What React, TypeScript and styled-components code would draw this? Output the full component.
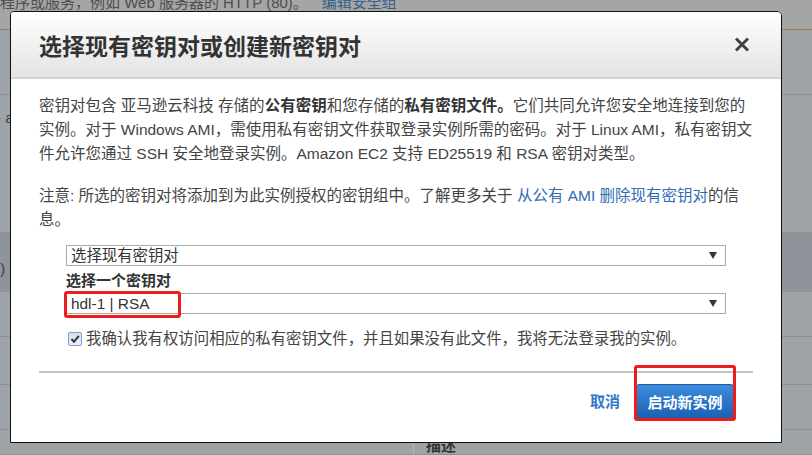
import styled, { createGlobalStyle } from 'styled-components'

const GlobalStyle = createGlobalStyle`
  html, body {
    margin: 0;
    padding: 0;
  }
  body {
    font-family: "Liberation Sans", "Noto Sans CJK SC", sans-serif;
  }
`

const Page = styled.div`
  position: relative;
  width: 812px;
  height: 455px;
  overflow: hidden;
  background: #9ea3a8;
  display: flex;
  flex-direction: column;
`

const TopStrip = styled.div`
  height: 29px;
  flex-shrink: 0;
  background: #a3a6a4;
  border-bottom: 1px solid #a57b4f;
  overflow: hidden;
  white-space: nowrap;
  font-size: 15px;
  line-height: 15px;
  color: #4d4f50;

  p {
    margin: -5px 0 0 0;
  }

  a {
    color: #3a5f8e;
    text-decoration: none;
    margin-left: 14px;
  }
`

const BgRow = styled.div<{ $h: number; $dark?: boolean }>`
  height: ${(p) => p.$h}px;
  flex-shrink: 0;
  box-sizing: border-box;
  border-bottom: 1px solid #8c9095;
  background: ${(p) => (p.$dark ? '#8f949a' : 'transparent')};
  display: flex;
  align-items: center;
  font-size: 15px;
  color: #3c3f42;
  position: relative;
`

const BgEdge = styled.span<{ $top: number }>`
  align-self: flex-start;
  margin-top: ${(p) => p.$top}px;
  margin-left: -4px;
`

const BgCell = styled.div`
  margin-left: 413px;
  align-self: stretch;
  border-left: 1px solid #b3b7bb;
  padding: 4px 0 0 12px;
  font-weight: bold;
  color: #333;
`

const Modal = styled.div`
  position: absolute;
  left: 10px;
  top: 11px;
  width: 772px;
  height: 432px;
  box-sizing: border-box;
  background: #fff;
  border: 1px solid #111;
  border-radius: 4px 5px 0 0;
  display: flex;
  flex-direction: column;
  overflow: hidden;
`

const Header = styled.div`
  height: 67px;
  flex-shrink: 0;
  box-sizing: border-box;
  background: linear-gradient(#ffffff, #e3e3e3);
  border-bottom: 2px solid #d3d3d3;
  display: flex;
  align-items: center;
  justify-content: space-between;
  padding: 0 30px 0 28px;
`

const Title = styled.h1`
  margin: 0;
  font-size: 23px;
  font-weight: bold;
  color: #333;
`

const CloseButton = styled.button`
  border: 0;
  background: none;
  padding: 0;
  width: 18px;
  height: 16px;
  display: flex;
  align-items: center;
  justify-content: center;
  cursor: pointer;
`

const Body = styled.div`
  padding: 15px 28px 0 28px;
  font-size: 15.5px;
  line-height: 24px;
  color: #444;
  display: flex;
  flex-direction: column;
`

const Para = styled.p<{ $gap?: number }>`
  margin: ${(p) => p.$gap ?? 0}px 0 0 0;
  white-space: nowrap;

  b {
    color: #333;
  }
`

const Link = styled.a`
  color: #2f6db5;
  text-decoration: none;
`

const Form = styled.div`
  margin: 13px 0 0 27px;
  width: 660px;
  display: flex;
  flex-direction: column;
`

const SelectWrap = styled.div`
  position: relative;
`

const Select = styled.div`
  height: 21px;
  box-sizing: border-box;
  border: 1px solid #a9a9a9;
  display: flex;
  align-items: center;
  justify-content: space-between;
  padding: 0 8px 0 4px;
  font-size: 15.4px;
  color: #333;
`

const Arrow = styled.span`
  width: 0;
  height: 0;
  border-left: 4px solid transparent;
  border-right: 4px solid transparent;
  border-top: 7px solid #333;
`

const Label = styled.div`
  margin: 4px 0 2px 0;
  font-size: 15px;
  line-height: 21px;
  font-weight: bold;
  color: #333;
`

const Highlight = styled.div<{ $l: number; $t: number; $w: number; $h: number }>`
  position: absolute;
  left: ${(p) => p.$l}px;
  top: ${(p) => p.$t}px;
  width: ${(p) => p.$w}px;
  height: ${(p) => p.$h}px;
  box-sizing: border-box;
  border: 3px solid #ee1d1d;
  border-radius: 3px;
  pointer-events: none;
`

const CheckRow = styled.label`
  margin: 15px 0 0 2px;
  display: flex;
  align-items: center;
  gap: 4px;
  font-size: 15.4px;
  line-height: 20px;
  color: #444;
  white-space: nowrap;
`

const CheckBox = styled.span`
  width: 14px;
  height: 14px;
  flex-shrink: 0;
  box-sizing: border-box;
  border: 1px solid #7d9fd0;
  border-radius: 2px;
  background: linear-gradient(#d6e1f0, #eef2f8);
  display: flex;
  align-items: center;
  justify-content: center;
`

const Divider = styled.hr`
  margin: 22px 0 0 0;
  border: 0;
  border-top: 2px solid #c4c4c4;
`

const Footer = styled.div`
  margin-top: 11px;
  display: flex;
  align-items: center;
  justify-content: flex-end;
  gap: 16px;
  padding-right: 19px;
`

const CancelLink = styled.a`
  font-size: 15px;
  font-weight: bold;
  color: #3477c6;
  text-decoration: none;
`

const ButtonWrap = styled.div`
  position: relative;
`

const PrimaryButton = styled.button`
  height: 35px;
  width: 98px;
  box-sizing: border-box;
  border: 1px solid #1c5aa3;
  border-radius: 3px;
  background: linear-gradient(#3d8cdc, #1a61b3);
  color: #fff;
  font-family: inherit;
  font-size: 15px;
  font-weight: bold;
  padding: 0;
  cursor: pointer;
`

export default function App() {
  return (
    <>
      <GlobalStyle />
      <Page>
        <TopStrip>
          <p>
            程序或服务，例如 Web 服务器的 HTTP (80)。<a>编辑安全组</a>
          </p>
        </TopStrip>
        <BgRow $h={65} />
        <BgRow $h={138}>
          <BgEdge $top={14}>- a</BgEdge>
        </BgRow>
        <BgRow $h={59} $dark>
          <BgEdge $top={27}>&nbsp;)</BgEdge>
        </BgRow>
        <BgRow $h={45} />
        <BgRow $h={48} />
        <BgRow $h={45} />
        <BgRow $h={25}>
          <BgCell>描述</BgCell>
        </BgRow>

        <Modal>
          <Header>
            <Title>选择现有密钥对或创建新密钥对</Title>
            <CloseButton aria-label="关闭">
              <svg width="16" height="15" viewBox="0 0 16 15">
                <path d="M2 1.5 L14 13.5 M14 1.5 L2 13.5" stroke="#444" strokeWidth="3" />
              </svg>
            </CloseButton>
          </Header>
          <Body>
            <Para>
              密钥对包含 亚马逊云科技 存储的<b>公有密钥</b>和您存储的<b>私有密钥文件。</b>它们共同允许您安全地连接到您的
              <br />
              实例。对于 Windows AMI，需使用私有密钥文件获取登录实例所需的密码。对于 Linux AMI，私有密钥文
              <br />
              件允许您通过 SSH 安全地登录实例。Amazon EC2 支持 ED25519 和 RSA 密钥对类型。
            </Para>
            <Para $gap={18}>
              注意: 所选的密钥对将添加到为此实例授权的密钥组中。了解更多关于 <Link>从公有 AMI 删除现有密钥对</Link>的信
              <br />
              息。
            </Para>
            <Form>
              <Select>
                <span>选择现有密钥对</span>
                <Arrow />
              </Select>
              <Label>选择一个密钥对</Label>
              <SelectWrap>
                <Select>
                  <span>hdl-1 | RSA</span>
                  <Arrow />
                </Select>
                <Highlight $l={-2} $t={-2} $w={117} $h={27} />
              </SelectWrap>
              <CheckRow>
                <CheckBox>
                  <svg width="10" height="10" viewBox="0 0 10 10">
                    <path d="M1.5 5 L4 7.8 L8.8 1.8" stroke="#333" strokeWidth="2" fill="none" />
                  </svg>
                </CheckBox>
                我确认我有权访问相应的私有密钥文件，并且如果没有此文件，我将无法登录我的实例。
              </CheckRow>
            </Form>
            <Divider />
            <Footer>
              <CancelLink>取消</CancelLink>
              <ButtonWrap>
                <PrimaryButton>启动新实例</PrimaryButton>
                <Highlight $l={-2} $t={-19} $w={102} $h={56} />
              </ButtonWrap>
            </Footer>
          </Body>
        </Modal>
      </Page>
    </>
  )
}
